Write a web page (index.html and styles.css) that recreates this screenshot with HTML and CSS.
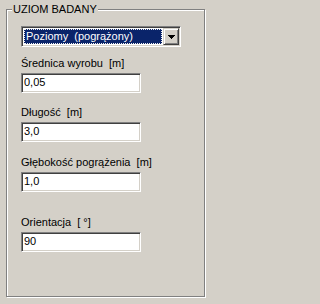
FILE: index.html
```html
<!DOCTYPE html>
<html lang="pl">
<head>
<meta charset="utf-8">
<title>Uziom badany</title>
<link rel="stylesheet" href="styles.css">
</head>
<body>
<div class="group">
  <span class="legend">UZIOM BADANY</span>
  <div class="combo">
    <div class="combo-value">Poziomy  (pogrążony)</div>
    <div class="combo-btn">
      <svg width="7" height="4" viewBox="0 0 7 4" shape-rendering="crispEdges">
        <rect x="0" y="0" width="7" height="1" fill="#000"/>
        <rect x="1" y="1" width="5" height="1" fill="#000"/>
        <rect x="2" y="2" width="3" height="1" fill="#000"/>
        <rect x="3" y="3" width="1" height="1" fill="#000"/>
      </svg>
    </div>
  </div>
  <div class="field f1">
    <div class="label">Średnica wyrobu  [m]</div>
    <div class="input">0,05</div>
  </div>
  <div class="field f2">
    <div class="label">Długość  [m]</div>
    <div class="input">3,0</div>
  </div>
  <div class="field f3">
    <div class="label">Głębokość pogrążenia  [m]</div>
    <div class="input">1,0</div>
  </div>
  <div class="field f4">
    <div class="label">Orientacja  [ °]</div>
    <div class="input">90</div>
  </div>
</div>
</body>
</html>
```
FILE: styles.css
```css
* { box-sizing: border-box; }
html, body {
  margin: 0;
  padding: 0;
  background: #d4d0c8;
}
body {
  width: 212px;
  height: 304px;
  overflow: hidden;
  font-family: "Liberation Sans", Arial, sans-serif;
  font-size: 11px;
  line-height: 13px;
  color: #000;
}
.group {
  position: relative;
  margin: 9px 0 0 6px;
  width: 199px;
  height: 288px;
  border: 1px solid #808080;
  box-shadow: 1px 1px 0 #fff, inset 1px 1px 0 #fff;
  padding: 16px 0 0 14px;
}
.legend {
  position: absolute;
  left: 5px;
  top: -7px;
  padding: 0 1px;
  background: #d4d0c8;
  white-space: pre;
}
.combo {
  width: 160px;
  height: 21px;
  display: flex;
  background: #fff;
  border: 1px solid;
  border-color: #808080 #fff #fff #808080;
  box-shadow: inset 1px 1px 0 #404040, inset -1px -1px 0 #d4d0c8;
  padding: 1px;
}
.combo-value {
  flex: 1;
  margin: 1px 1px 1px 1px;
  height: 15px;
  background: #0a246a;
  color: #fff;
  border: 1px dotted #f0f0f0;
  padding-left: 1px;
  white-space: pre;
  overflow: hidden;
}
.combo-btn {
  width: 16px;
  height: 17px;
  background: #d4d0c8;
  border: 1px solid;
  border-color: #d4d0c8 #404040 #404040 #d4d0c8;
  box-shadow: inset 1px 1px 0 #fff, inset -1px -1px 0 #808080;
  display: flex;
  align-items: center;
  justify-content: center;
  padding-top: 1px;
}
.combo-btn svg { display: block; }
.field { display: flex; flex-direction: column; gap: 3px; }
.f1 { margin-top: 10px; }
.f2 { margin-top: 13px; }
.f3 { margin-top: 14px; }
.f4 { margin-top: 24px; }
.label {
  white-space: pre;
  height: 13px;
}
.input {
  width: 120px;
  height: 20px;
  background: #fff;
  border: 1px solid;
  border-color: #808080 #fff #fff #808080;
  box-shadow: inset 1px 1px 0 #404040, inset -1px -1px 0 #d4d0c8;
  padding: 2px 2px 0 2px;
  white-space: pre;
}
```
